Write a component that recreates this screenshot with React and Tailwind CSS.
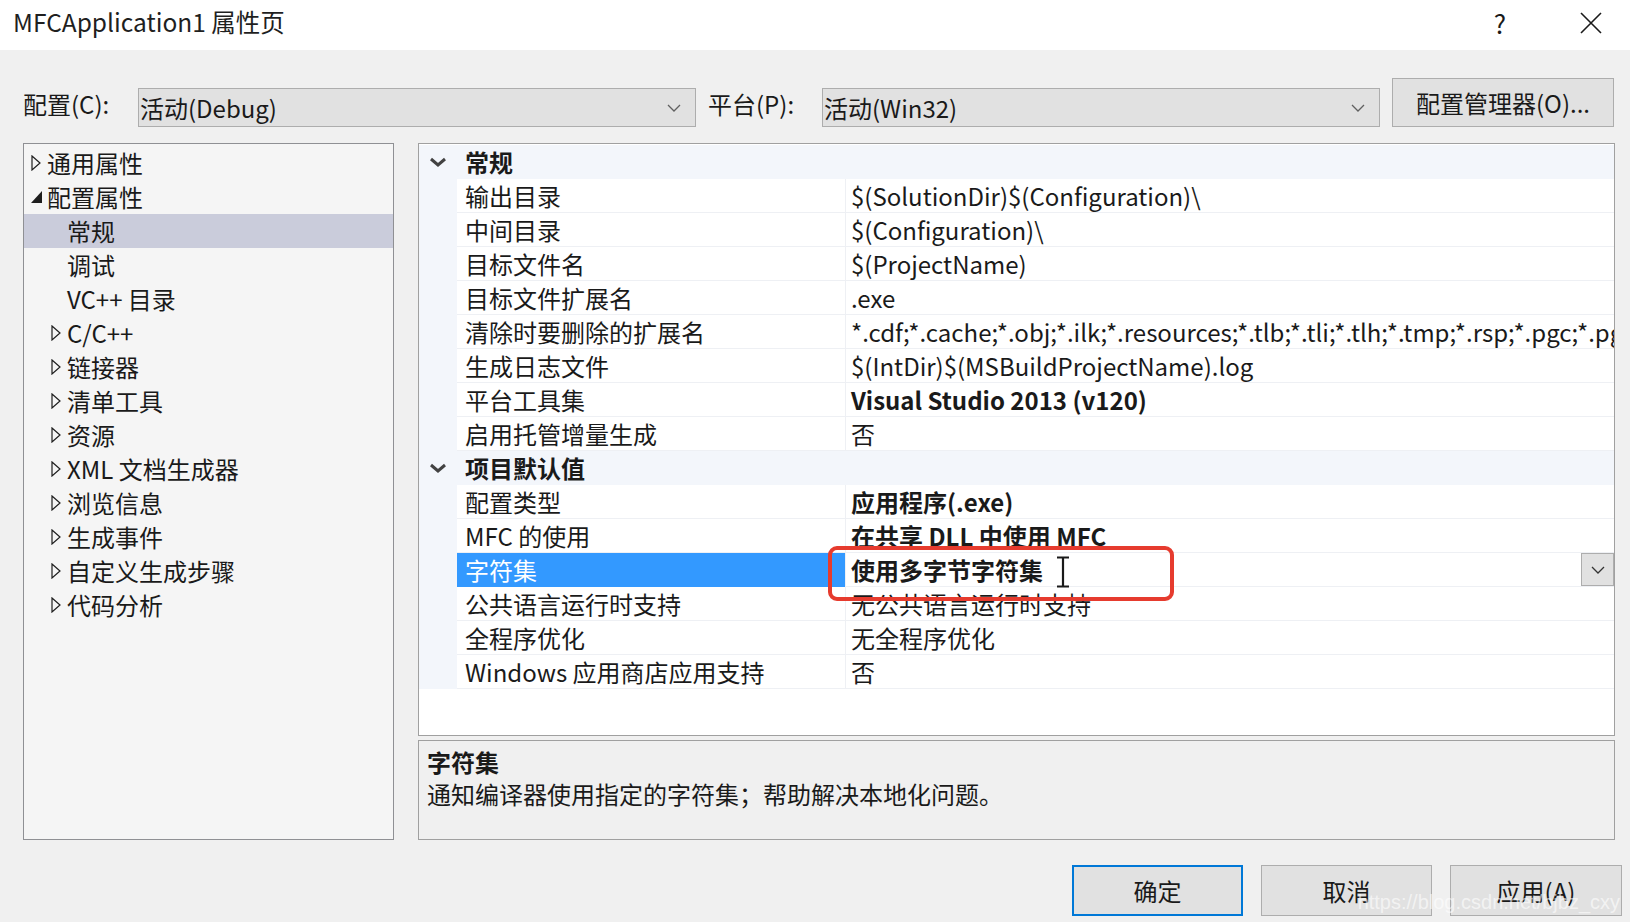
import React from "react";

const general = [
  ["输出目录", "$(SolutionDir)$(Configuration)\\"],
  ["中间目录", "$(Configuration)\\"],
  ["目标文件名", "$(ProjectName)"],
  ["目标文件扩展名", ".exe"],
  ["清除时要删除的扩展名", "*.cdf;*.cache;*.obj;*.ilk;*.resources;*.tlb;*.tli;*.tlh;*.tmp;*.rsp;*.pgc;*.pgd;*.meta;*.tlog;*.manifest;*.res;*.pch;*.exp;*.idb;*.rep;*.xdc;*.pdb;*_manifest.rc;*.bsc;*.sbr;*.xml;*.metagen;*.bi"],
  ["生成日志文件", "$(IntDir)$(MSBuildProjectName).log"],
  ["平台工具集", "Visual Studio 2013 (v120)", true],
  ["启用托管增量生成", "否"],
];

const defaults = [
  ["配置类型", "应用程序(.exe)", true],
  ["MFC 的使用", "在共享 DLL 中使用 MFC", true],
  ["字符集", "使用多字节字符集", true, true],
  ["公共语言运行时支持", "无公共语言运行时支持"],
  ["全程序优化", "无全程序优化"],
  ["Windows 应用商店应用支持", "否"],
];

const tree = [
  { label: "通用属性", level: 0, icon: "closed" },
  { label: "配置属性", level: 0, icon: "open" },
  { label: "常规", level: 1, selected: true },
  { label: "调试", level: 1 },
  { label: "VC++ 目录", level: 1 },
  { label: "C/C++", level: 1, icon: "closed" },
  { label: "链接器", level: 1, icon: "closed" },
  { label: "清单工具", level: 1, icon: "closed" },
  { label: "资源", level: 1, icon: "closed" },
  { label: "XML 文档生成器", level: 1, icon: "closed" },
  { label: "浏览信息", level: 1, icon: "closed" },
  { label: "生成事件", level: 1, icon: "closed" },
  { label: "自定义生成步骤", level: 1, icon: "closed" },
  { label: "代码分析", level: 1, icon: "closed" },
];

function TreeArrow({ type }) {
  if (type === "open") {
    return (
      <svg width="11" height="12" viewBox="0 0 11 12">
        <polygon points="11,0 11,12 0,12" fill="#1e1e1e" />
      </svg>
    );
  }
  return (
    <svg width="10" height="16" viewBox="0 0 10 16">
      <polygon points="1,1 9,8 1,15" fill="none" stroke="#1e1e1e" strokeWidth="1.2" />
    </svg>
  );
}

function SmallChevron({ color = "#555" }) {
  return (
    <svg width="14" height="8" viewBox="0 0 14 8">
      <polyline points="1,1 7,7 13,1" fill="none" stroke={color} strokeWidth="1.3" />
    </svg>
  );
}

function Select({ value }) {
  return (
    <div className="w-[558px] h-[39px] bg-[#e1e1e1] border border-[#adadad] flex items-center justify-between pl-[1px] pr-[14px]">
      <span>{value}</span>
      <SmallChevron color="#606060" />
    </div>
  );
}

function Category({ title }) {
  return (
    <div className="h-[34px] flex items-center bg-[#f3f6fb]">
      <div className="w-[38px] flex justify-center">
        <svg width="18" height="10" viewBox="0 0 18 10">
          <polyline points="2,2 9,8 16,2" fill="none" stroke="#424242" strokeWidth="3" />
        </svg>
      </div>
      <span className="pl-[8px] font-bold">{title}</span>
    </div>
  );
}

function PropRow({ name, value, bold, selected }) {
  return (
    <div className="h-[34px] flex bg-[#f3f6fb]">
      <div className="w-[38px] shrink-0" />
      <div
        className={
          selected
            ? "w-[388px] shrink-0 flex items-center pl-[8px] bg-[#3399ff] text-white border-b border-[#3399ff]"
            : "w-[388px] shrink-0 flex items-center pl-[8px] bg-white border-b border-[#eef0f4]"
        }
      >
        {name}
      </div>
      <div className="flex-1 min-w-0 flex items-center bg-white border-b border-l border-[#eef0f4] relative overflow-hidden">
        <span className={bold ? "pl-[5px] font-bold whitespace-nowrap leading-[30px]" : "pl-[5px] whitespace-nowrap leading-[30px]"}>
          {value}
        </span>
        {selected && (
          <div className="absolute right-0 top-0 w-[33px] h-[33px] bg-[#e1e1e1] border border-[#adadad] flex items-center justify-center">
            <SmallChevron color="#333" />
          </div>
        )}
      </div>
    </div>
  );
}

export default function App() {
  return (
    <div className="w-[1630px] h-[922px] bg-[#f0f0f0] flex flex-col overflow-hidden text-[24px] leading-none text-[#1a1a1a] font-['Noto_Sans_CJK_SC',sans-serif]">
      {/* Title bar */}
      <div className="h-[50px] bg-white flex items-center justify-between pl-[13px] pr-[28px] pb-[5px] shrink-0">
        <span className="text-[#1f1f1f] text-[24.5px]">MFCApplication1 属性页</span>
        <div className="flex items-center gap-[74px]">
          <span className="text-[26px]">?</span>
          <svg width="22" height="22" viewBox="0 0 22 22">
            <path d="M1 1 L21 21 M21 1 L1 21" stroke="#1a1a1a" strokeWidth="1.6" />
          </svg>
        </div>
      </div>

      {/* Configuration row */}
      <div className="flex items-end mt-[28px] pl-[23px] h-[49px] shrink-0">
        <span className="w-[115px] pb-[11px]">配置(C):</span>
        <Select value="活动(Debug)" />
        <span className="w-[126px] pl-[12px] pb-[11px]">平台(P):</span>
        <Select value="活动(Win32)" />
        <div className="ml-[12px] w-[222px] h-[49px] bg-[#e1e1e1] border border-[#adadad] flex items-center justify-center">
          配置管理器(O)...
        </div>
      </div>

      {/* Main area */}
      <div className="flex mt-[16px] pl-[23px] h-[697px] shrink-0">
        {/* Tree */}
        <div className="w-[371px] h-full bg-[#f5f5f5] border border-[#8f9094] pt-[2px]">
          {tree.map((item) => (
            <div
              key={item.label}
              className={
                item.selected
                  ? "h-[34px] flex items-center bg-[#caccdb]"
                  : "h-[34px] flex items-center"
              }
            >
              <div className={item.level === 0 ? "w-[23px] pl-[7px] flex items-center" : "w-[43px] pl-[27px] flex items-center"}>
                {item.icon && <TreeArrow type={item.icon} />}
              </div>
              <span>{item.label}</span>
            </div>
          ))}
        </div>

        {/* Right column */}
        <div className="ml-[24px] w-[1197px] flex flex-col">
          <div className="relative h-[593px] bg-white border border-[#a0a0a0] overflow-hidden">
            <div className="pt-[1px]">
              <Category title="常规" />
              {general.map(([n, v, b]) => (
                <PropRow key={n} name={n} value={v} bold={b} />
              ))}
              <Category title="项目默认值" />
              {defaults.map(([n, v, b, s]) => (
                <PropRow key={n} name={n} value={v} bold={b} selected={s} />
              ))}
            </div>

            {/* text cursor */}
            <svg className="absolute left-[636px] top-[412px]" width="16" height="32" viewBox="0 0 16 32">
              <path d="M2 1.5 H14 M2 30.5 H14 M8 1.5 V30.5" stroke="#1a1a1a" strokeWidth="2.2" fill="none" />
            </svg>

            {/* red highlight box */}
            <div className="absolute left-[409px] top-[402px] w-[346px] h-[55px] border-[4px] border-[#e63b2e] rounded-[9px]" />
          </div>

          <div className="mt-[4px] h-[100px] bg-[#f0f0f0] border border-[#a0a0a0] px-[8px] pt-[4px]">
            <div className="font-bold h-[34px] flex items-center">字符集</div>
            <div className="h-[30px] flex items-center">通知编译器使用指定的字符集；帮助解决本地化问题。</div>
          </div>
        </div>
      </div>

      {/* Buttons */}
      <div className="flex justify-end gap-[18px] pr-[8px] mt-[25px] shrink-0 relative">
        <div className="w-[171px] h-[51px] bg-[#e1e1e1] border-2 border-[#0078d7] flex items-center justify-center">确定</div>
        <div className="w-[171px] h-[51px] bg-[#e1e1e1] border border-[#adadad] flex items-center justify-center">取消</div>
        <div className="w-[172px] h-[51px] bg-[#e1e1e1] border border-[#adadad] flex items-center justify-center">应用(A)</div>
        <span className="absolute right-[10px] top-[27px] text-[20px] text-white/60 font-['Liberation_Sans',sans-serif]">
          https://blog.csdn.net/bjbz_cxy
        </span>
      </div>
    </div>
  );
}
